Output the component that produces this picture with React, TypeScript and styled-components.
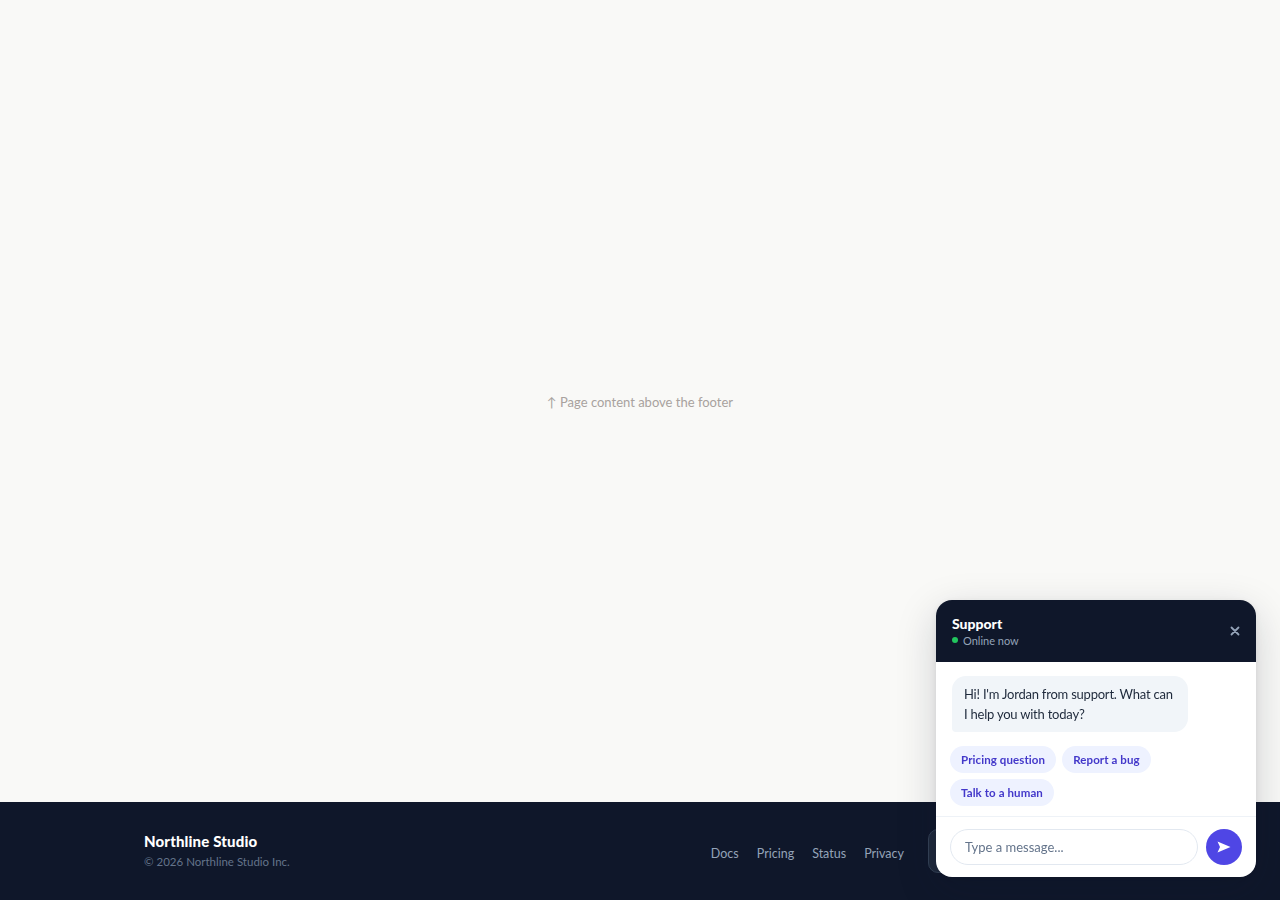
import React from "react";
import styled, { createGlobalStyle } from "styled-components";

const Global = createGlobalStyle`
  * { box-sizing: border-box; }
  html, body { margin: 0; padding: 0; }
  body {
    background: #f9f9f7;
    font-family: Lato, "Segoe UI", sans-serif;
    -webkit-font-smoothing: antialiased;
  }
`;

const Page = styled.div`
  min-height: 100vh;
  display: flex;
  flex-direction: column;
`;

const Main = styled.main`
  flex: 1;
  display: flex;
  align-items: center;
  justify-content: center;
  padding-top: 2px;
  color: #a8a29e;
  font-size: 13px;
`;

const Footer = styled.footer`
  height: 98px;
  background: #0f172a;
  display: flex;
  justify-content: center;
`;

const FooterInner = styled.div`
  width: 992px;
  display: flex;
  align-items: center;
  justify-content: space-between;
`;

const Brand = styled.div`
  display: flex;
  flex-direction: column;
  gap: 4px;
`;

const BrandName = styled.div`
  color: #ffffff;
  font-weight: 900;
  font-size: 15px;
  line-height: 18px;
  letter-spacing: 0.15px;
`;

const Copy = styled.div`
  color: #64748b;
  font-size: 11.5px;
  line-height: 16px;
`;

const FooterRight = styled.div`
  display: flex;
  align-items: center;
  gap: 24px;
`;

const Links = styled.nav`
  display: flex;
  gap: 18px;
  padding-top: 5px;
`;

const FooterLink = styled.a`
  color: #94a3b8;
  font-size: 12.5px;
  text-decoration: none;
`;

const GhostButton = styled.button`
  height: 44px;
  width: 208px;
  border-radius: 10px;
  background: #1e293b;
  border: 1px solid #334155;
  color: #e2e8f0;
  font-family: inherit;
  font-size: 13px;
`;

const Widget = styled.div`
  position: fixed;
  right: 24px;
  bottom: 23px;
  width: 320px;
  border-radius: 16px;
  background: #ffffff;
  overflow: hidden;
  box-shadow: 0 12px 40px rgba(15, 23, 42, 0.18), 0 2px 8px rgba(15, 23, 42, 0.08);
  display: flex;
  flex-direction: column;
`;

const Header = styled.div`
  height: 62px;
  background: #0f172a;
  padding: 0 16px;
  display: flex;
  align-items: center;
  justify-content: space-between;
`;

const Title = styled.div`
  color: #ffffff;
  font-weight: 900;
  font-size: 14px;
  line-height: 18px;
`;

const Status = styled.div`
  display: flex;
  align-items: center;
  gap: 5px;
  color: #94a3b8;
  font-size: 11px;
  line-height: 15px;
`;

const Dot = styled.span`
  width: 6px;
  height: 6px;
  border-radius: 50%;
  background: #22c55e;
`;

const Close = styled.button`
  background: none;
  border: none;
  padding: 0;
  color: #94a3b8;
  display: flex;
  cursor: pointer;
`;

const Body = styled.div`
  padding: 14px 14px 10px;
  display: flex;
  flex-direction: column;
  gap: 14px;
  border-bottom: 1px solid #eef2f7;
`;

const Bubble = styled.div`
  align-self: flex-start;
  margin-left: 2px;
  max-width: 236px;
  background: #f1f5f9;
  color: #1e293b;
  font-size: 13px;
  line-height: 20px;
  letter-spacing: -0.22px;
  padding: 8px 12px;
  border-radius: 14px 14px 14px 4px;
`;

const Chips = styled.div`
  display: flex;
  flex-wrap: wrap;
  gap: 6px;
  max-width: 220px;
`;

const Chip = styled.button`
  height: 27px;
  padding: 0 11px;
  border-radius: 999px;
  border: none;
  background: #eef2ff;
  color: #4338ca;
  font-family: inherit;
  font-weight: 700;
  font-size: 11.5px;
  letter-spacing: 0.1px;
`;

const InputRow = styled.div`
  padding: 12px 14px;
  display: flex;
  gap: 8px;
  align-items: center;
`;

const Input = styled.input`
  flex: 1;
  height: 36px;
  border-radius: 999px;
  border: 1px solid #e2e8f0;
  padding: 0 14px;
  font-family: inherit;
  font-size: 13px;
  color: #1e293b;
  outline: none;
  &::placeholder { color: #64748b; }
`;

const Send = styled.button`
  width: 36px;
  height: 36px;
  border-radius: 50%;
  border: none;
  background: #4f46e5;
  display: flex;
  align-items: center;
  justify-content: center;
  padding: 0;
`;

export default function App() {
  return (
    <>
      <Global />
      <Page>
        <Main>↑ Page content above the footer</Main>
        <Footer>
          <FooterInner>
            <Brand>
              <BrandName>Northline Studio</BrandName>
              <Copy>© 2026 Northline Studio Inc.</Copy>
            </Brand>
            <FooterRight>
              <Links>
                <FooterLink href="#">Docs</FooterLink>
                <FooterLink href="#">Pricing</FooterLink>
                <FooterLink href="#">Status</FooterLink>
                <FooterLink href="#">Privacy</FooterLink>
              </Links>
              <GhostButton>Chat with us</GhostButton>
            </FooterRight>
          </FooterInner>
        </Footer>
      </Page>
      <Widget>
        <Header>
          <div>
            <Title>Support</Title>
            <Status>
              <Dot />
              Online now
            </Status>
          </div>
          <Close aria-label="Close">
            <svg width="10" height="10" viewBox="0 0 10 10">
              <path d="M1.5 1.5 L8.5 8.5 M8.5 1.5 L1.5 8.5" stroke="currentColor" strokeWidth="1.8" strokeLinecap="round" />
            </svg>
          </Close>
        </Header>
        <Body>
          <Bubble>Hi! I'm Jordan from support. What can I help you with today?</Bubble>
          <Chips>
            <Chip>Pricing question</Chip>
            <Chip>Report a bug</Chip>
            <Chip>Talk to a human</Chip>
          </Chips>
        </Body>
        <InputRow>
          <Input placeholder="Type a message..." />
          <Send aria-label="Send">
            <svg width="14" height="12" viewBox="0 0 14 12">
              <path d="M0.5 0.5 L13.5 6 L0.5 11.5 L3 6 Z" fill="#ffffff" />
            </svg>
          </Send>
        </InputRow>
      </Widget>
    </>
  );
}
